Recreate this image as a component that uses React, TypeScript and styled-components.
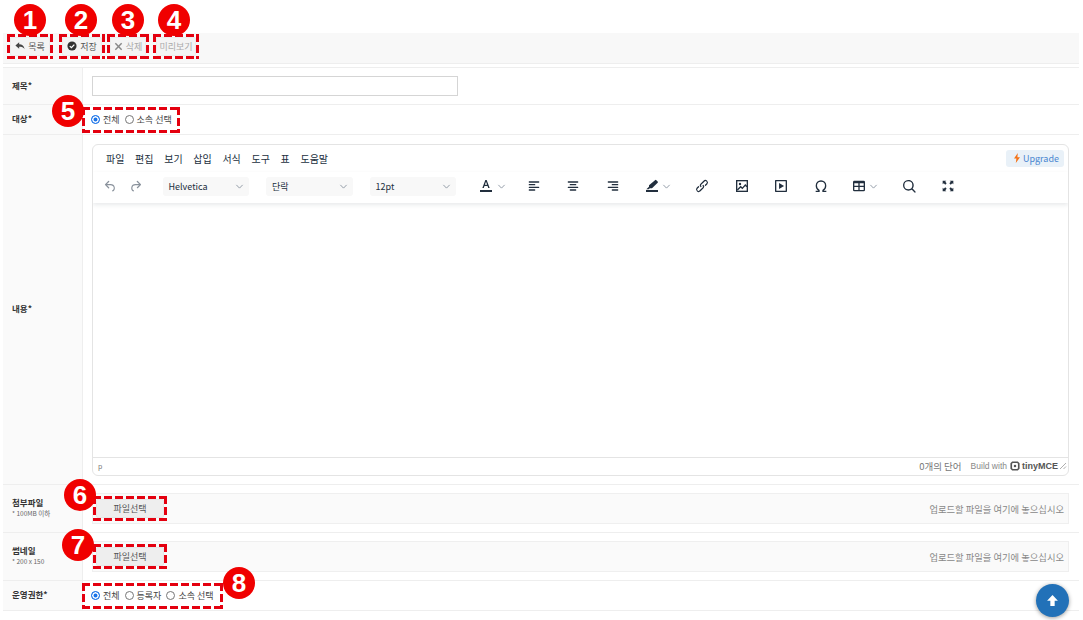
import React from "react";
import styled, { createGlobalStyle } from "styled-components";

const GlobalStyle = createGlobalStyle`
  html, body { margin: 0; padding: 0; background: #fff; }
  body {
    font-family: "Noto Sans CJK KR", "Liberation Sans", sans-serif;
    font-size: 9px;
    color: #333;
    overflow: hidden;
  }
`;

const Page = styled.div`
  width: 1083px;
  height: 620px;
  padding: 33px 4px 0 3px;
  box-sizing: border-box;
  position: relative;
`;

const Toolbar = styled.div`
  display: flex;
  align-items: center;
  height: 31px;
  padding: 0 0 4px 4px;
  box-sizing: border-box;
  background: #f8f8f8;
  border-bottom: 1px solid #eeeeee;
  margin-bottom: 3px;
`;

const dashH = "repeating-linear-gradient(90deg, #e4000f 0 8px, transparent 8px 11px)";
const dashV = "repeating-linear-gradient(180deg, #e4000f 0 8px, transparent 8px 11px)";

// dashes of the annotation frames are longer than a dashed border gives
const Marked = styled.div<{ $w: number; $h?: number; $mr?: number; $ml?: number }>`
  position: relative;
  display: flex;
  align-items: center;
  flex-shrink: 0;
  box-sizing: border-box;
  width: ${(p) => p.$w}px;
  height: ${(p) => p.$h || 25}px;
  margin-right: ${(p) => p.$mr || 0}px;
  margin-left: ${(p) => p.$ml || 0}px;
  padding: 3px;
  background-image: ${dashH}, ${dashH}, ${dashV}, ${dashV};
  background-size: 100% 3px, 100% 3px, 3px 100%, 3px 100%;
  background-position: left top, left bottom, left top, right top;
  background-repeat: no-repeat;
`;

const Badge = styled.span<{ $left: number; $top: number }>`
  position: absolute;
  left: ${(p) => p.$left}px;
  top: ${(p) => p.$top}px;
  width: 32px;
  height: 32px;
  border-radius: 50%;
  background: #f00000;
  color: #fff;
  font: bold 26px/32px "Liberation Sans", sans-serif;
  text-align: center;
  z-index: 2;
`;

const ActionButton = styled.button<{ $dim?: boolean }>`
  display: flex;
  align-items: center;
  justify-content: center;
  gap: 3px;
  width: 100%;
  height: 100%;
  padding: 0;
  border: 1px solid #ececec;
  border-radius: 2px;
  background: #f4f4f4;
  color: ${(p) => (p.$dim ? "#aaa" : "#555")};
  font: inherit;
  font-size: 9px;
  white-space: nowrap;
`;

const Table = styled.div`
  border-top: 1px solid #eeeeee;
`;

const Row = styled.div<{ $h: number }>`
  display: grid;
  grid-template-columns: 80px 1fr;
  height: ${(p) => p.$h}px;
  box-sizing: border-box;
  border-bottom: 1px solid #eeeeee;
`;

const Label = styled.div`
  display: flex;
  flex-direction: column;
  justify-content: center;
  padding: 0 0 3px 9px;
  background: #fafafa;
  border-right: 1px solid #eeeeee;
  color: #333;
  font-size: 8.5px;
  font-weight: 700;
  line-height: 12px;
`;

const Hint = styled.span`
  font-size: 6.5px;
  font-weight: 400;
  line-height: 10px;
  color: #666;
`;

const Cell = styled.div<{ $flush?: boolean }>`
  display: flex;
  align-items: center;
  position: relative;
  padding: 0 10px 0 ${(p) => (p.$flush ? 0 : 9)}px;
  min-width: 0;
`;

const TextInput = styled.input`
  width: 366px;
  height: 20px;
  box-sizing: border-box;
  border: 1px solid #d5d5d5;
  background: #fff;
`;

const RadioGroup = styled.div`
  display: flex;
  align-items: center;
  gap: 5px;
  padding-left: 6px;
  color: #444;
  font-size: 9px;
`;

const RadioDot = styled.span<{ $on?: boolean }>`
  width: 9px;
  height: 9px;
  box-sizing: border-box;
  border-radius: 50%;
  border: 1px solid ${(p) => (p.$on ? "#1a73e8" : "#777")};
  background: ${(p) => (p.$on ? "#1a73e8" : "#fff")};
  box-shadow: ${(p) => (p.$on ? "inset 0 0 0 1.5px #fff" : "none")};
`;

const RadioText = styled.span`
  margin-left: -2px;
  white-space: nowrap;
`;

const Editor = styled.div`
  display: flex;
  flex-direction: column;
  width: 977px;
  height: 332px;
  box-sizing: border-box;
  border: 1px solid #e4e4e4;
  border-radius: 6px;
  overflow: hidden;
`;

const MenuBar = styled.div`
  display: flex;
  align-items: center;
  gap: 10.7px;
  height: 27px;
  padding: 0 4px 0 13px;
  color: #222f3e;
  font-size: 10px;
  flex-shrink: 0;
`;

const Upgrade = styled.span`
  display: flex;
  align-items: center;
  gap: 2px;
  margin-left: auto;
  height: 17px;
  padding: 0 5px 0 7px;
  border-radius: 3px;
  background: #e9f1f8;
  color: #4a86d0;
  font-size: 9px;
`;

const EditorTools = styled.div`
  display: flex;
  align-items: center;
  height: 31px;
  padding: 0 0 2px 5px;
  box-sizing: border-box;
  flex-shrink: 0;
  box-shadow: 0 2px 4px rgba(34, 47, 62, 0.1);
  position: relative;
`;

const Tool = styled.span<{ $w?: number; $ml?: number; $gap?: number }>`
  display: flex;
  align-items: center;
  justify-content: center;
  gap: ${(p) => p.$gap ?? 2}px;
  flex-shrink: 0;
  width: ${(p) => p.$w ?? 39.5}px;
  margin-left: ${(p) => p.$ml ?? 0}px;
  color: #222f3e;
`;

const Select = styled.span<{ $ml: number }>`
  display: flex;
  align-items: center;
  justify-content: space-between;
  flex-shrink: 0;
  width: 86.5px;
  height: 19px;
  margin-left: ${(p) => p.$ml}px;
  padding: 0 5px 0 6px;
  box-sizing: border-box;
  border-radius: 3px;
  background: #f8f8f8;
  color: #222f3e;
  font-size: 9px;
`;

const EditArea = styled.div`
  flex: 1;
`;

const StatusBar = styled.div`
  display: flex;
  align-items: center;
  height: 17px;
  padding: 0 1px 0 5px;
  flex-shrink: 0;
  border-top: 1px solid #e4e4e4;
  color: #777;
  font-size: 9.5px;
`;

const PathTag = styled.span`
  font-size: 7px;
`;

const WordCount = styled.span`
  margin-left: auto;
  margin-right: 9px;
`;

const Brand = styled.span`
  display: flex;
  align-items: center;
  gap: 3px;
  margin-right: 1px;
  color: #888;
  font: 8.5px "Liberation Sans", sans-serif;
`;

const BrandName = styled.b`
  color: #555;
  font: bold 9px "Liberation Sans", sans-serif;
  margin-left: -1px;
`;

const DropZone = styled.div`
  display: flex;
  align-items: center;
  justify-content: space-between;
  width: 977px;
  height: 31px;
  box-sizing: border-box;
  padding: 0 4px 0 0;
  background: #fafafa;
  border: 1px solid #efefef;
  color: #888;
  font-size: 9.3px;
`;

const FileButton = styled.button`
  width: 100%;
  height: 100%;
  padding: 0;
  border: 1px solid #e6e6e6;
  border-radius: 2px;
  background: #eeeeee;
  color: #555;
  font: inherit;
  font-size: 9px;
`;

const ScrollTop = styled.button`
  position: absolute;
  left: 1036px;
  top: 584px;
  width: 33px;
  height: 33px;
  padding: 0;
  display: flex;
  align-items: center;
  justify-content: center;
  border: 0;
  border-radius: 50%;
  background: #2271b8;
  box-shadow: 0 1px 4px rgba(0, 0, 0, 0.4);
  z-index: 3;
`;

const Ic = ({ d, size = 16 }: { d: string; size?: number }) => (
  <svg width={size} height={size} viewBox="0 0 24 24" fill="currentColor">
    <path d={d} fillRule="evenodd" />
  </svg>
);

const Chevron = () => (
  <svg width="9" height="9" viewBox="0 0 10 10" fill="none" stroke="#8a94a0" strokeWidth="1">
    <path d="M1.5 3.2 5 6.8l3.5-3.6" />
  </svg>
);

const icons = {
  undo: "M6.4 8H12c3.7 0 6.2 2 6.8 5.1.6 2.7-.4 5.6-2.9 6.7-.5.2-1 0-1.3-.5-.2-.5 0-1 .5-1.3 1.6-.7 2.4-2.7 2-4.5C16.7 11.5 15 10 12 10H6.4l3.3 3.3a1 1 0 1 1-1.4 1.4l-5-5a1 1 0 0 1 0-1.4l5-5a1 1 0 1 1 1.4 1.4L6.4 8z",
  redo: "M17.6 10H12c-2.8 0-4.4 1.4-4.9 3.5-.4 2 .3 3.8 1.9 4.5.5.3.8.8.5 1.3-.2.5-.8.8-1.3.5-2.5-1.1-3.5-4-2.9-6.7C5.9 10 8.3 8 12 8h5.6l-3.3-3.3a1 1 0 1 1 1.4-1.4l5 5a1 1 0 0 1 0 1.4l-5 5a1 1 0 0 1-1.4-1.4l3.3-3.3z",
  alignLeft: "M5 5h14a1 1 0 0 1 0 2H5a1 1 0 1 1 0-2zm0 4h8a1 1 0 0 1 0 2H5a1 1 0 0 1 0-2zm0 8h8a1 1 0 0 1 0 2H5a1 1 0 0 1 0-2zm0-4h14a1 1 0 0 1 0 2H5a1 1 0 0 1 0-2z",
  alignCenter: "M5 5h14a1 1 0 0 1 0 2H5a1 1 0 1 1 0-2zm3 4h8a1 1 0 0 1 0 2H8a1 1 0 1 1 0-2zm0 8h8a1 1 0 0 1 0 2H8a1 1 0 0 1 0-2zm-3-4h14a1 1 0 0 1 0 2H5a1 1 0 0 1 0-2z",
  alignRight: "M5 5h14a1 1 0 0 1 0 2H5a1 1 0 1 1 0-2zm6 4h8a1 1 0 0 1 0 2h-8a1 1 0 0 1 0-2zm0 8h8a1 1 0 0 1 0 2h-8a1 1 0 0 1 0-2zm-6-4h14a1 1 0 0 1 0 2H5a1 1 0 0 1 0-2z",
  textColor: "M3 18h18v3H3v-3zM11 3h2l4.500 12h-2.200l-1-3H9.700l-1 3H6.500L11 3zm1 2.800L10.300 10h3.400L12 5.800z",
  highlight: "M3 18h18v3H3v-3zM16.500 3.200a1.500 1.500 0 0 1 2 0l2 2a1.500 1.500 0 0 1 0 2L12 15.500H8.800L7 17H3.500l4-4V11z",
  link: "M6.200 12.300a1 1 0 0 1 1.400 1.400l-2 2a2 2 0 1 0 2.800 2.800l4.800-4.800a1 1 0 0 0 0-1.400 1 1 0 1 1 1.400-1.300 2.900 2.900 0 0 1 0 4L9.800 20a4 4 0 0 1-5.600-5.700l2-2zm11.600-.6a1 1 0 0 1-1.400-1.400l2-2a2 2 0 1 0-2.800-2.800L10.800 10.300a1 1 0 0 0 0 1.400 1 1 0 1 1-1.400 1.300 2.900 2.900 0 0 1 0-4L14.200 4a4 4 0 0 1 5.600 5.700l-2 2z",
  media: "M4 3h16c.6 0 1 .4 1 1v16c0 .6-.4 1-1 1H4a1 1 0 0 1-1-1V4c0-.6.4-1 1-1zm1 2v14h14V5H5zm4.100 2.500 7.500 4.500-7.500 4.500v-9z",
  search: "M16 17.300a8 8 0 1 1 1.400-1.400l4.300 4.400a1 1 0 0 1-1.400 1.400l-4.400-4.400zM11 17a6 6 0 1 0 0-12 6 6 0 0 0 0 12z",
  table: "M19 4a2 2 0 0 1 2 2v12a2 2 0 0 1-2 2H5a2 2 0 0 1-2-2V6c0-1.100.9-2 2-2h14zM5 13.500V18h6v-4.500H5zm8 0V18h6v-4.500h-6zm0-2h6V8h-6v3.500zM5 11.500h6V8H5v3.500z",
  fullscreen: "M4 4h5.500L7.800 5.700l2.200 2.200L7.900 10 5.700 7.800 4 9.500V4zm16 0v5.500l-1.700-1.700-2.200 2.200L14 7.900l2.200-2.200L14.500 4H20zM4 20v-5.500l1.700 1.700 2.200-2.200L10 16.100l-2.200 2.200L9.500 20H4zm16 0h-5.500l1.700-1.700-2.200-2.200 2.100-2.100 2.200 2.200 1.700-1.700V20z",
};

const Radio = ({ label, on }: { label: string; on?: boolean }) => (
  <>
    <RadioDot $on={on} />
    <RadioText>{label}</RadioText>
  </>
);

const FileRow = ({ title, hint, badge, left, top }: { title: string; hint: string; badge: string; left: number; top: number }) => (
  <Row $h={48}>
    <Label>
      {title}
      <Hint>* {hint}</Hint>
    </Label>
    <Cell>
      <DropZone>
        <Marked $w={74}>
          <FileButton>파일선택</FileButton>
          <Badge $left={left} $top={top}>{badge}</Badge>
        </Marked>
        <span>업로드할 파일을 여기에 놓으십시오</span>
      </DropZone>
    </Cell>
  </Row>
);

export default function App() {
  return (
    <Page>
      <GlobalStyle />
      <Toolbar>
        <Marked $w={46} $mr={6}>
          <ActionButton>
            <svg width="10" height="10" viewBox="0 0 12 12" fill="#444">
              <path d="M5 1.500v2.300c3.500 0 6 1.800 6.500 6-1.300-2.300-3.200-2.900-6.500-2.900v2.400L.5 5.500z" />
            </svg>
            목록
          </ActionButton>
          <Badge $left={7} $top={-30}>1</Badge>
        </Marked>
        <Marked $w={46} $mr={2}>
          <ActionButton>
            <svg width="10" height="10" viewBox="0 0 12 12">
              <circle cx="6" cy="6" r="5.500" fill="#333" />
              <path d="M3.300 6.100 5.300 8l3.500-3.700" stroke="#fff" strokeWidth="1.500" fill="none" />
            </svg>
            저장
          </ActionButton>
          <Badge $left={6} $top={-30}>2</Badge>
        </Marked>
        <Marked $w={42} $mr={4}>
          <ActionButton $dim>
            <svg width="9" height="9" viewBox="0 0 10 10" stroke="#888" strokeWidth="1.600">
              <path d="M1.500 1.500l7 7M8.500 1.500l-7 7" />
            </svg>
            삭제
          </ActionButton>
          <Badge $left={5} $top={-30}>3</Badge>
        </Marked>
        <Marked $w={46}>
          <ActionButton $dim>미리보기</ActionButton>
          <Badge $left={5} $top={-30}>4</Badge>
        </Marked>
      </Toolbar>

      <Table>
        <Row $h={37}>
          <Label>제목*</Label>
          <Cell>
            <TextInput />
          </Cell>
        </Row>
        <Row $h={30}>
          <Label>대상*</Label>
          <Cell $flush>
            <Marked $w={98} $h={26} $ml={-1}>
              <RadioGroup>
                <Radio label="전체" on />
                <Radio label="소속 선택" />
              </RadioGroup>
              <Badge $left={-30} $top={-12}>5</Badge>
            </Marked>
          </Cell>
        </Row>
        <Row $h={350}>
          <Label>내용*</Label>
          <Cell>
            <Editor>
              <MenuBar>
                <span>파일</span>
                <span>편집</span>
                <span>보기</span>
                <span>삽입</span>
                <span>서식</span>
                <span>도구</span>
                <span>표</span>
                <span>도움말</span>
                <Upgrade>
                  <svg width="8" height="10" viewBox="0 0 8 10" fill="#f47216">
                    <path d="M4.800 0 1 5.600h2.400L2.800 10 7 4.200H4.400z" />
                  </svg>
                  Upgrade
                </Upgrade>
              </MenuBar>
              <EditorTools>
                <Tool $w={25}><svg width="15" height="15" viewBox="0 0 24 24" fill="#8a929c"><path d={icons.undo} /></svg></Tool>
                <Tool $w={25}><svg width="15" height="15" viewBox="0 0 24 24" fill="#8a929c"><path d={icons.redo} /></svg></Tool>
                <Select $ml={14.5}>Helvetica<Chevron /></Select>
                <Select $ml={17}>단락<Chevron /></Select>
                <Select $ml={17}>12pt<Chevron /></Select>
                <Tool $w={44.5} $ml={13.5} $gap={3}><Ic d={icons.textColor} /><Chevron /></Tool>
                <Tool><Ic d={icons.alignLeft} /></Tool>
                <Tool><Ic d={icons.alignCenter} /></Tool>
                <Tool><Ic d={icons.alignRight} /></Tool>
                <Tool $w={50}><Ic d={icons.highlight} /><Chevron /></Tool>
                <Tool><Ic d={icons.link} /></Tool>
                <Tool>
                  <svg width="16" height="16" viewBox="0 0 24 24" fill="none" stroke="currentColor" strokeWidth="2">
                    <rect x="4" y="4" width="16" height="16" />
                    <circle cx="9" cy="9" r="1.800" fill="currentColor" strokeWidth="0" />
                    <path d="M5 18l5-5 2.500 2.500L17 10.500l2.500 2.500" />
                  </svg>
                </Tool>
                <Tool><Ic d={icons.media} /></Tool>
                <Tool><svg width="16" height="16" viewBox="0 0 24 24" fill="none" stroke="currentColor" strokeWidth="2"><path d="M4 20h5v-1.500C6.500 17 5 14.500 5 11.500 5 7.500 8 4.500 12 4.500s7 3 7 7c0 3-1.500 5.500-4 7V20h5" /></svg></Tool>
                <Tool $w={48.5}><Ic d={icons.table} /><Chevron /></Tool>
                <Tool><Ic d={icons.search} /></Tool>
                <Tool><Ic d={icons.fullscreen} /></Tool>
              </EditorTools>
              <EditArea />
              <StatusBar>
                <PathTag>p</PathTag>
                <WordCount>0개의 단어</WordCount>
                <Brand>
                  Build with
                  <svg width="10" height="10" viewBox="0 0 12 12" fill="none" stroke="#555" strokeWidth="2">
                    <path d="M3 1.500h6L10.500 3v6L9 10.500H3L1.500 9V3z" />
                    <circle cx="6" cy="6" r="1.500" fill="#555" strokeWidth="0" />
                  </svg>
                  <BrandName>tinyMCE</BrandName>
                </Brand>
                <svg width="8" height="8" viewBox="0 0 8 8" stroke="#999" strokeWidth="0.8">
                  <path d="M1 7l6-6M4.500 7L7 4.500" />
                </svg>
              </StatusBar>
            </Editor>
          </Cell>
        </Row>
        <FileRow title="첨부파일" hint="100MB 이하" badge="6" left={-29} top={-17} />
        <FileRow title="썸네일" hint="200 x 150" badge="7" left={-31} top={-15} />
        <Row $h={30}>
          <Label>운영권한*</Label>
          <Cell $flush>
            <Marked $w={141} $h={26} $ml={-1}>
              <RadioGroup>
                <Radio label="전체" on />
                <Radio label="등록자" />
                <Radio label="소속 선택" />
              </RadioGroup>
              <Badge $left={141} $top={-16}>8</Badge>
            </Marked>
          </Cell>
        </Row>
      </Table>

      <ScrollTop>
        <svg width="13" height="13" viewBox="0 0 12 12" fill="#fff">
          <path d="M6 1 11 6.300H8V11H4V6.300H1z" />
        </svg>
      </ScrollTop>
    </Page>
  );
}
